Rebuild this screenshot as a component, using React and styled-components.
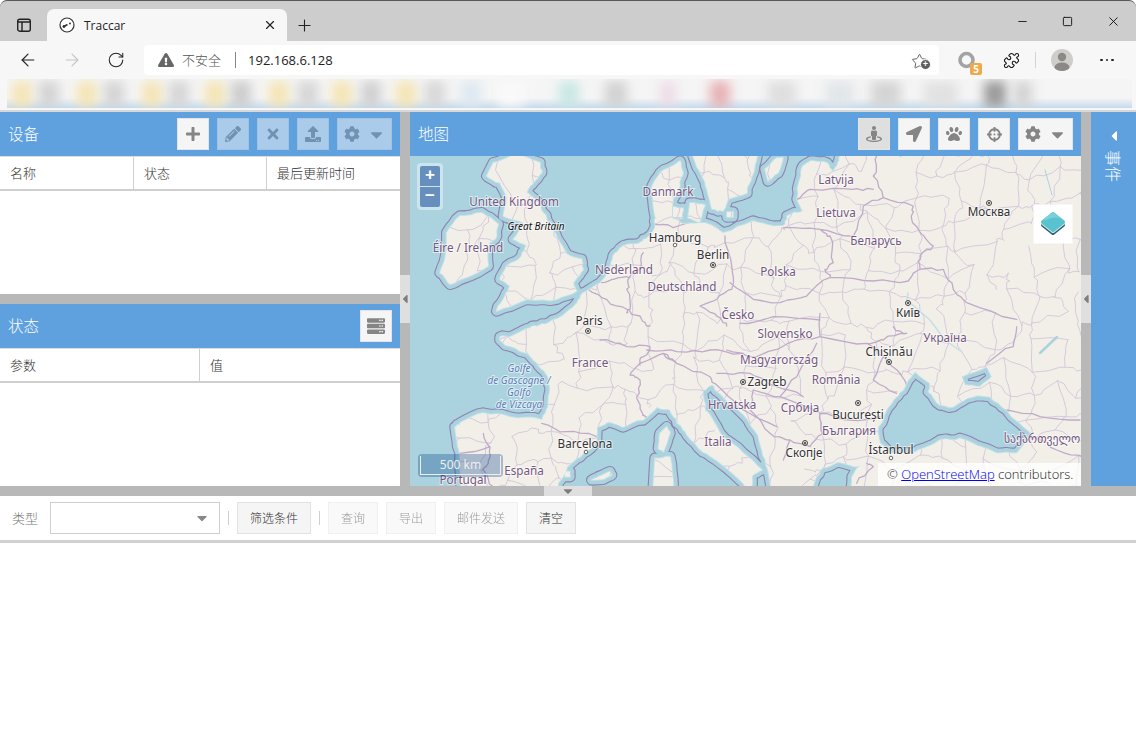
import React from 'react';
import styled, { createGlobalStyle } from 'styled-components';
import { ArrowLeft, ArrowRight, Minus, Plus, Puzzle, RotateCw, Square, Star, X } from 'lucide-react';
import {
  FaCaretDown, FaCaretLeft, FaCog, FaCrosshairs, FaExclamationTriangle, FaLocationArrow, FaPaw,
  FaPencilAlt, FaPlus, FaServer, FaStreetView, FaTimes, FaUpload,
} from 'react-icons/fa';

const CJK = `"Noto Sans CJK SC", "Noto Sans", sans-serif`;

const GlobalStyle = createGlobalStyle`
  html, body { margin: 0; height: 100%; background: #fff; overflow: hidden; }
  * { box-sizing: border-box; }
`;

const Page = styled.div`
  width: 1136px;
  height: 742px;
  display: flex;
  flex-direction: column;
  font-family: ${CJK};
`;

/* browser chrome */
const TabStrip = styled.div`
  height: 41px;
  background: #cdcdcd;
  border-top: 1px solid #55585c;
  border-radius: 7px 7px 0 0;
  display: flex;
  align-items: flex-end;
`;

const StripIcon = styled.div`
  width: 47px;
  height: 32px;
  display: flex;
  align-items: center;
  justify-content: center;
  color: #222;
`;

const Tab = styled.div`
  width: 240px;
  height: 32px;
  background: #f7f7f7;
  border-radius: 7px 7px 0 0;
  display: flex;
  align-items: center;
  padding: 0 10px 0 12px;
  font: 12px "Open Sans", sans-serif;
  color: #222;
`;

const TabTitle = styled.span`
  flex: 1;
  margin-left: 9px;
`;

const NewTab = styled.div`
  width: 34px;
  height: 32px;
  display: flex;
  align-items: center;
  justify-content: center;
`;

const WindowButtons = styled.div`
  margin-left: auto;
  height: 40px;
  display: flex;
  align-self: flex-start;
`;

const WindowButton = styled.div`
  width: 45.5px;
  display: flex;
  align-items: center;
  justify-content: center;
  color: #111;
`;

const Toolbar = styled.div`
  height: 38px;
  background: #f7f7f7;
  display: flex;
  align-items: center;
  padding-left: 6px;
`;

const NavButton = styled.div`
  width: 44px;
  height: 34px;
  display: flex;
  align-items: center;
  justify-content: center;
  color: ${(p) => (p.$off ? '#c4c4c4' : '#222')};
`;

const AddressBar = styled.div`
  width: 795px;
  height: 30px;
  margin-left: 6px;
  margin-right: 6px;
  background: #fff;
  border-radius: 4px;
  display: flex;
  align-items: center;
  padding: 0 10px 0 14px;
  color: #666;
`;

const Insecure = styled.span`
  font-size: 13px;
  font-weight: 300;
  color: #555;
  margin-left: 8px;
  position: relative;
  top: -1px;
`;

const AddressSep = styled.span`
  width: 1px;
  height: 16px;
  background: #888;
  margin: 0 12px 0 14px;
`;

const Url = styled.span`
  flex: 1;
  font: 13px "Open Sans", sans-serif;
  color: #222;
`;

const StarWrap = styled.div`
  position: relative;
  width: 18px;
  height: 18px;
  color: #555;
`;

const StarPlus = styled.span`
  position: absolute;
  right: -2px;
  bottom: -1px;
  width: 9px;
  height: 9px;
  border-radius: 50%;
  background: #5f5f5f;
  border: 1px solid #fff;
  box-sizing: content-box;
  color: #fff;
  font: bold 9px/9px "Liberation Sans", sans-serif;
  text-align: center;
`;

const ExtensionSlot = styled.div`
  position: relative;
  width: 44px;
  height: 34px;
  display: flex;
  align-items: center;
  justify-content: center;
  color: #111;
`;

const Badge = styled.span`
  position: absolute;
  left: 25px;
  top: 20px;
  width: 12px;
  height: 12px;
  background: #f0a94a;
  border-radius: 2px;
  color: #fff;
  font: bold 10px/12px "Open Sans", sans-serif;
  text-align: center;
`;

const ToolbarSep = styled.span`
  width: 1px;
  height: 16px;
  background: #d2d2d2;
  margin: 0 4px 0 2px;
`;

const Avatar = styled.div`
  width: 22px;
  height: 22px;
  margin: 0 27px 0 11px;
  border-radius: 50%;
  background: #cfcdca;
  overflow: hidden;
  display: flex;
`;

const Dots = styled.div`
  display: flex;
  gap: 3px;
`;

const Dot = styled.span`
  width: 2.5px;
  height: 2.5px;
  border-radius: 50%;
  background: #222;
`;

const BookmarksRow = styled.div`
  height: 31px;
  background: #f7f7f7;
  padding: 0 4px 2px 7px;
`;

const BookmarksBlur = styled.div`
  height: 29px;
  background: linear-gradient(#f5f5f5 65%, #c6daeb);
  display: flex;
  align-items: center;
  overflow: hidden;
`;

const Blob = styled.span`
  flex: none;
  width: ${(p) => p.$w}px;
  height: 26px;
  margin-left: ${(p) => p.$gap}px;
  background: ${(p) => p.$c};
  filter: blur(6px);
  opacity: 0.9;
`;

const ChromeEdge = styled.div`
  height: 2px;
  background: #d8d8d8;
`;

/* application */
const Workspace = styled.div`
  height: 374px;
  display: flex;
`;

const LeftColumn = styled.div`
  width: 400px;
  display: flex;
  flex-direction: column;
`;

const Panel = styled.div`
  flex: 1;
  display: flex;
  flex-direction: column;
  background: #fff;
`;

const PanelHeader = styled.div`
  height: 44px;
  flex: none;
  background: #5fa1de;
  display: flex;
  align-items: center;
  gap: 8px;
  padding: 0 8px;
`;

const PanelTitle = styled.div`
  flex: 1;
  font-size: 15.5px;
  font-weight: 300;
  color: #fff;
  padding-bottom: 2px;
`;

const ToolButton = styled.div`
  width: ${(p) => p.$w || 32}px;
  height: 32px;
  flex: none;
  background: ${(p) => (p.$pressed ? '#dfdfdf' : '#f5f5f5')};
  border: 1px solid #e4e4e4;
  opacity: ${(p) => (p.$off ? 0.5 : 1)};
  display: flex;
  align-items: center;
  justify-content: center;
  gap: 7px;
  color: #858585;
  font-size: 16px;
`;

const Caret = styled(FaCaretDown)`
  font-size: 19px;
`;

const GridHead = styled.div`
  height: 35px;
  flex: none;
  display: flex;
  border-bottom: 2px solid #cfcfcf;
  border-top: 1px solid #dcdcdc;
`;

const GridCell = styled.div`
  width: ${(p) => p.$w}px;
  display: flex;
  align-items: center;
  padding: 0 0 2px 10px;
  font-size: 13px;
  font-weight: 300;
  color: #333;
  border-right: 1px solid #d0d0d0;
  &:last-child { border-right: 0; }
`;

const VSplit = styled.div`
  width: 10px;
  flex: none;
  background: #b8b8b8;
  display: flex;
  align-items: center;
`;

const VHandle = styled.div`
  width: 10px;
  height: 48px;
  background: #dfdfdf;
  display: flex;
  align-items: center;
  justify-content: center;
  color: #7d7d7d;
  font-size: 14px;
`;

const HSplit = styled.div`
  height: 10px;
  flex: none;
  background: #b8b8b8;
  display: flex;
  justify-content: center;
`;

const HHandle = styled.div`
  width: 48px;
  height: 10px;
  background: #dfdfdf;
  display: flex;
  align-items: center;
  justify-content: center;
  color: #7d7d7d;
  font-size: 14px;
`;

const MapColumn = styled.div`
  width: 671px;
  display: flex;
  flex-direction: column;
`;

const MapArea = styled.div`
  position: relative;
  height: 330px;
  overflow: hidden;
  background: #aad3df;
`;

const MapSvg = styled.svg`
  display: block;
  width: 671px;
  height: 330px;
`;

const ZoomControl = styled.div`
  position: absolute;
  left: 7px;
  top: 7px;
  padding: 3px;
  width: 26px;
  border-radius: 4px;
  background: rgba(255, 255, 255, 0.4);
  display: flex;
  flex-direction: column;
  gap: 1px;
`;

const ZoomButton = styled.div`
  height: 20px;
  background: #668fbd;
  border-radius: ${(p) => p.$r};
  color: #fff;
  font: bold 17px/18px "Liberation Sans", sans-serif;
  text-align: center;
`;

const LayerSwitch = styled.div`
  position: absolute;
  left: 623px;
  top: 48px;
  width: 40px;
  height: 40px;
  background: #fff;
  border: 1px solid rgba(255, 255, 255, 0.5);
  background-clip: padding-box;
  display: flex;
  align-items: center;
  justify-content: center;
`;

const ScaleLine = styled.div`
  position: absolute;
  left: 8px;
  bottom: 9px;
  width: 85px;
  height: 23px;
  padding: 2px;
  border-radius: 4px;
  background: rgba(0, 60, 136, 0.3);
`;

const ScaleInner = styled.div`
  height: 19px;
  border: 1px solid #eee;
  border-top: 0;
  color: #eee;
  font: 12px/18px "Noto Sans", sans-serif;
  text-align: center;
`;

const Attribution = styled.div`
  position: absolute;
  right: 0;
  bottom: 0;
  height: 23px;
  width: 203px;
  padding: 2px 0 0 9px;
  background: rgba(255, 255, 255, 0.78);
  font: 300 13px/18px "Open Sans", sans-serif;
  color: #222;
  white-space: nowrap;
  a { color: #0000ee; text-decoration: underline; }
`;

const EventsPanel = styled.div`
  width: 45px;
  background: #5fa1de;
  display: flex;
  flex-direction: column;
  align-items: center;
  padding-top: 16px;
  color: #fff;
`;

const ChevronBox = styled.div`
  height: 16px;
  font-size: 16px;
  display: flex;
  align-items: center;
`;

const VerticalTitle = styled.div`
  margin-top: 6px;
  writing-mode: vertical-rl;
  text-orientation: sideways;
  font-size: 16px;
  font-weight: 300;
  line-height: 18px;
`;

const BottomPanel = styled.div`
  flex: 1;
  background: #fff;
`;

const ReportBar = styled.div`
  height: 47px;
  display: flex;
  align-items: flex-start;
  padding: 6px 0 0 12px;
  border-bottom: 3px solid #d0d0d0;
`;

const BarLabel = styled.div`
  width: 38px;
  height: 32px;
  font-size: 13px;
  font-weight: 300;
  line-height: 32px;
  color: #777;
`;

const Combo = styled.div`
  width: 170px;
  height: 32px;
  border: 1px solid #cfcfcf;
  display: flex;
  align-items: center;
  justify-content: flex-end;
  padding-right: 9px;
  color: #888;
  font-size: 16px;
`;

const BarSep = styled.span`
  width: 1px;
  height: 14px;
  background: #cfcfcf;
  margin: 9px 8px 0;
`;

const BarButton = styled.div`
  width: ${(p) => p.$w}px;
  height: 32px;
  margin-right: 8px;
  background: #f5f5f5;
  border: 1px solid #e2e2e2;
  font-size: 12px;
  font-weight: 300;
  line-height: 30px;
  text-align: center;
  color: #333;
  opacity: ${(p) => (p.$off ? 0.5 : 1)};
  ${(p) => p.$tight && 'margin-right: 0;'}
`;

/* map drawing, in page coordinates */
const seededRandom = (seed) => {
  let s = seed;
  return () => {
    s = (s * 16807) % 2147483647;
    return s / 2147483647;
  };
};

// crop coords (3x) to page coords
const crop = (ox, oy, flat) => {
  const out = [];
  for (let i = 0; i < flat.length; i += 2) out.push([ox + flat[i] / 3, oy + flat[i + 1] / 3]);
  return out;
};
const A = (...f) => crop(410, 156, f);
const B = (...f) => crop(740, 156, f);
const C = (...f) => crop(410, 320, f);
const D = (...f) => crop(740, 320, f);

const rough = (pts, amp, rnd, depth = 2) => {
  let cur = pts;
  for (let d = 0; d < depth; d++) {
    const next = [cur[0]];
    for (let i = 1; i < cur.length; i++) {
      const [x0, y0] = cur[i - 1];
      const [x1, y1] = cur[i];
      next.push([(x0 + x1) / 2 + (rnd() - 0.5) * amp, (y0 + y1) / 2 + (rnd() - 0.5) * amp], [x1, y1]);
    }
    cur = next;
  }
  return cur;
};

const toPath = (pts, close) =>
  'M' + pts.map((p) => `${p[0].toFixed(1)} ${p[1].toFixed(1)}`).join('L') + (close ? 'Z' : '');

const flat = (...f) => {
  const out = [];
  for (let i = 0; i < f.length; i += 2) out.push([f[i], f[i + 1]]);
  return out;
};

const coastRnd = seededRandom(4711);
const shape = (pts, amp = 2.2) => toPath(rough(pts, amp, coastRnd), true);

const continent = flat(
  840, 140, 1095, 140, 1095, 500, 850, 500, 852, 477, 860, 466, 838, 462, 822, 468, 815, 480, 810, 500,
  772, 500, 768, 470, 762, 450, 758, 435, 748, 420, 730, 403, 718, 392, 712, 385, 703, 390, 705, 410, 720, 433,
  743, 453, 762, 470, 752, 476, 750, 500,
  743, 483, 720, 463, 703, 452, 687, 435, 677, 423, 670, 410, 657, 407, 643, 420, 623, 427, 610, 422, 597, 427,
  595, 443, 580, 457, 567, 467, 558, 483, 556, 500, 460, 500,
  460, 453, 455, 427, 460, 423, 483, 413, 510, 417, 542, 420, 548, 407, 550, 387, 547, 375, 537, 363, 527, 353,
  505, 345, 500, 337, 510, 337, 530, 328, 540, 325, 550, 322, 557, 319, 577, 303, 583, 293, 600, 283, 610, 269,
  613, 256, 623, 246, 643, 241, 650, 236, 655, 228, 655, 216, 652, 186, 660, 173, 680, 161, 683, 173, 680, 186,
  673, 199, 673, 219, 683, 224, 705, 223, 723, 233, 753, 221, 773, 226, 783, 226, 787, 216, 803, 211, 797, 199,
  800, 179, 803, 166, 813, 161, 827, 163, 832, 171, 837, 166, 840, 156,
);

const landPath = [
  shape(continent),
  shape(D(525, 155, 570, 190, 565, 215, 600, 255, 640, 260, 700, 230, 750, 230, 800, 270, 875, 340, 830, 400, 770, 400, 660, 355, 600, 360, 520, 400, 450, 400, 420, 370, 415, 320, 440, 270, 460, 240, 490, 210, 510, 175)),
  shape(D(665, 170, 740, 140, 755, 170, 720, 200, 675, 195), 1),
  shape(A(250, 20, 320, -5, 390, 20, 395, 50, 370, 80, 350, 110, 385, 140, 400, 170, 425, 215, 450, 260, 470, 295, 515, 310, 520, 340, 490, 380, 500, 405, 440, 430, 350, 430, 260, 465, 285, 420, 300, 390, 270, 370, 290, 330, 335, 300, 350, 270, 310, 250, 340, 200, 280, 180, 290, 130, 270, 80, 230, 60)),
  shape(A(110, 230, 150, 180, 215, 170, 265, 205, 260, 240, 235, 270, 235, 330, 180, 360, 120, 385, 90, 350, 110, 280)),
  shape(flat(693, 140, 693, 156, 702, 176, 707, 189, 712, 209, 723, 211, 728, 199, 747, 193, 752, 176, 757, 156, 760, 140)),
  shape(flat(765, 169, 777, 158, 783, 158, 778, 173, 768, 181), 1),
  shape(flat(690, 203, 705, 205, 700, 222, 688, 218), 1.5),
  shape(flat(673, 207, 683, 208, 682, 218, 673, 217), 1),
  shape(flat(727, 212, 733, 212, 733, 217, 727, 217), 0.5),
  shape(C(770, 320, 780, 340, 760, 395, 745, 385, 750, 340), 1),
  shape(C(735, 415, 780, 410, 790, 500, 730, 500), 1),
  shape(C(545, 480, 565, 470, 600, 455, 605, 465, 580, 478), 1),
  shape(C(465, 455, 480, 455, 480, 470, 465, 470), 0.5),
].join('');

const borders = [
  // Europe west
  A(735, 205, 790, 215, 850, 195), A(700, 290, 690, 340, 660, 362, 650, 400, 660, 460, 650, 470), A(575, 380, 610, 370, 660, 365),
  A(535, 400, 590, 430, 650, 460, 690, 480, 720, 510), A(945, 240, 965, 330, 965, 400, 920, 430, 870, 450, 920, 480, 950, 510),
  C(570, 60, 650, 80, 720, 80, 700, 110, 690, 135), C(660, 165, 690, 130, 760, 100, 800, 130),
  C(660, 165, 690, 180, 680, 230, 700, 285, 710, 300), C(395, 310, 470, 335, 560, 350),
  C(150, 400, 240, 380, 235, 430, 220, 450, 250, 500), C(220, 340, 240, 380),
  C(710, 90, 800, 95, 900, 90, 1000, 100), C(760, 100, 800, 130, 900, 170, 920, 195),
  C(920, 160, 1020, 160, 1100, 200, 1180, 230), C(920, 195, 980, 260, 1100, 320),
  // central and east
  B(-30, 380, 40, 430, 120, 440, 200, 420, 270, 365), B(270, 365, 400, 375, 505, 375, 540, 340, 540, 300, 580, 270, 545, 235, 515, 190, 520, 150, 430, 125, 400, 60, 410, 0),
  B(270, 240, 280, 320, 255, 340, 270, 365), B(240, 220, 340, 240, 370, 150, 430, 125), B(130, 215, 240, 220, 270, 240),
  B(170, 130, 210, 100, 340, 100, 400, 100), B(540, 340, 610, 340, 640, 400, 680, 440, 830, 490),
  D(830, 20, 820, 80, 740, 130), D(240, -20, 240, 50, 380, 70, 430, 110, 480, 160, 500, 200),
  D(0, 10, 100, -10, 240, 0), D(-40, 90, 50, 110, 170, 60, 240, 50), D(230, 70, 170, 170, 120, 230),
  D(240, 280, 330, 300, 420, 290), D(240, 280, 250, 340, 210, 380, 150, 360), D(40, 210, 120, 230, 240, 280), D(40, 210, 30, 270, 90, 340, 150, 360, 130, 420),
  D(800, 270, 900, 290, 1020, 300), D(880, 350, 950, 390, 1030, 410), D(380, 430, 400, 440, 350, 490),
  D(380, 70, 430, 60, 500, 40, 460, 20), D(430, 110, 400, 180, 470, 220),
];

const regionRnd = seededRandom(1234);
const regionPaths = (() => {
  const step = 24;
  const cols = 28;
  const rows = 15;
  const nodes = [];
  for (let r = 0; r < rows; r++) {
    nodes.push([]);
    for (let c = 0; c < cols; c++) {
      nodes[r].push([436 + c * step + (regionRnd() - 0.5) * 20, 150 + r * step + (regionRnd() - 0.5) * 20]);
    }
  }
  const out = [];
  for (let r = 0; r < rows; r++) {
    for (let c = 0; c < cols; c++) {
      if (c + 1 < cols && regionRnd() > 0.22) out.push(toPath(rough([nodes[r][c], nodes[r][c + 1]], 6, regionRnd), false));
      if (r + 1 < rows && regionRnd() > 0.22) out.push(toPath(rough([nodes[r][c], nodes[r + 1][c]], 6, regionRnd), false));
    }
  }
  return out.join('');
})();

const countryPath = (() => {
  const rnd = seededRandom(99);
  return borders.map((b) => toPath(rough(b, 3.5, rnd), false)).join('');
})();

const LandShape = styled.path`
  fill: ${(p) => p.$fill || 'none'};
  fill-rule: evenodd;
  clip-rule: evenodd;
  stroke: ${(p) => p.$stroke || 'none'};
  stroke-width: ${(p) => p.$sw || 0}px;
  stroke-linejoin: round;
`;

const BorderLine = styled.path`
  fill: none;
  stroke: ${(p) => p.$c};
  stroke-width: ${(p) => p.$sw}px;
  stroke-linejoin: round;
  stroke-linecap: round;
`;

const MapLabel = styled.text`
  font-family: "Noto Sans", "Noto Sans CJK SC", "DejaVu Sans", sans-serif;
  font-size: ${(p) => p.$size || 11.7}px;
  font-style: ${(p) => (p.$italic ? 'italic' : 'normal')};
  fill: ${(p) => p.$c};
  stroke: rgba(255, 255, 255, 0.6);
  stroke-width: 2px;
  paint-order: stroke;
  text-anchor: middle;
`;

const COUNTRY = '#75587f';
const CITY = '#333';
const SEA = '#5d7fb5';

const labels = [
  ['Danmark', 668, 196, COUNTRY], ['United Kingdom', 514, 206, COUNTRY], ['Éire / Ireland', 468, 252, COUNTRY],
  ['Nederland', 624, 274, COUNTRY], ['Deutschland', 682, 291, COUNTRY], ['Polska', 778, 276, COUNTRY],
  ['Latvija', 836, 184, COUNTRY], ['Lietuva', 836, 217, COUNTRY], ['Беларусь', 876, 245, COUNTRY],
  ['Україна', 945, 342, COUNTRY], ['Česko', 738, 319, COUNTRY], ['France', 590, 367, COUNTRY],
  ['Slovensko', 785, 338, COUNTRY], ['Magyarország', 779, 364, COUNTRY], ['România', 836, 384, COUNTRY],
  ['Hrvatska', 732, 409, COUNTRY], ['Србија', 800, 412, COUNTRY], ['България', 849, 435, COUNTRY],
  ['Italia', 718, 446, COUNTRY], ['España', 524, 475, COUNTRY], ['Portugal', 463, 484, COUNTRY],
  ['საქართველო', 1042, 443, COUNTRY],
  ['Hamburg', 675, 242, CITY], ['Berlin', 713, 259, CITY], ['Москва', 989, 216, CITY], ['Київ', 908, 317, CITY],
  ['Paris', 589, 325, CITY], ['Chișinău', 889, 356, CITY], ['Zagreb', 767, 386, CITY], ['București', 858, 419, CITY],
  ['Barcelona', 585, 448, CITY], ['Скопје', 804, 457, CITY], ['İstanbul', 891, 454, CITY],
];

const seaLabels = [['Golfe', 519, 372], ['de Gascogne /', 519, 384], ['Golfo', 519, 396], ['de Vizcaya', 519, 408]];

const capitals = [
  [989, 203], [713, 265], [588, 331], [908, 303], [889, 362], [743, 382], [858, 403], [805, 443],
];
const towns = [[675, 245], [586, 452], [891, 458]];

const EuropeMap = () => (
  <MapSvg viewBox="410 156 671 330">
    <defs>
      <clipPath id="land-clip">
        <path d={landPath} clipRule="evenodd" />
      </clipPath>
    </defs>
    <rect x="410" y="156" width="671" height="330" fill="#aad3df" />
    <LandShape d={landPath} $stroke="#8f83ad" $sw={11.4} />
    <LandShape d={landPath} $stroke="#aad3df" $sw={9.2} />
    <LandShape d={landPath} $stroke="#c3e0e5" $sw={2} />
    <LandShape d={landPath} $fill="#f2efe9" />
    <g clipPath="url(#land-clip)">
      <BorderLine d={regionPaths} $c="#d5cadb" $sw={1} />
      <BorderLine d={countryPath} $c="#bfabc8" $sw={1.3} />
      <BorderLine d="M908 293L907 300L930 320L945 340L962 352" $c="#c3e0e5" $sw={1.5} />
      <BorderLine d="M1040 353L1057 337" $c="#aad3df" $sw={2.5} />
      <BorderLine d="M1045 170L1052 195" $c="#aad3df" $sw={1} />
    </g>
    {labels.map(([t, x, y, c]) => (
      <MapLabel key={t} x={x} y={y} $c={c}>{t}</MapLabel>
    ))}
    <MapLabel x={536} y={230} $c="#111" $size={10} $italic>Great Britain</MapLabel>
    {seaLabels.map(([t, x, y]) => (
      <MapLabel key={t} x={x} y={y} $c={SEA} $size={10} $italic>{t}</MapLabel>
    ))}
    {capitals.map(([x, y]) => (
      <g key={`${x}-${y}`} fill="none" stroke="#444">
        <circle cx={x} cy={y} r="2.5" />
        <circle cx={x} cy={y} r="0.7" fill="#444" />
      </g>
    ))}
    {towns.map(([x, y]) => (
      <circle key={`${x}-${y}`} cx={x} cy={y} r="1.8" fill="#fff" stroke="#666" />
    ))}
  </MapSvg>
);

const LayersIcon = () => (
  <svg width="28" height="30" viewBox="0 0 28 30" strokeWidth="4" strokeLinejoin="round">
    <path d="M14 8L24 16L14 24L4 16Z" fill="#2c5a6e" stroke="#2c5a6e" />
    <path d="M14 6.2L24 14.2L14 22.2L4 14.2Z" fill="#cfe6ea" stroke="#cfe6ea" />
    <path d="M14 5L24 13L14 21L4 13Z" fill="#58c3d0" stroke="#58c3d0" />
    <path d="M14 3.5L22 9.5Q14 7 6 11.5L4.5 10Z" fill="#7dd0da" stroke="none" />
  </svg>
);

const Favicon = () => (
  <svg width="16" height="16" viewBox="0 0 16 16">
    <circle cx="8" cy="8" r="7" fill="#fff" stroke="#333" strokeWidth="1.2" />
    <path d="M4 10L8.5 7.5" stroke="#333" strokeWidth="1.5" />
    <circle cx="5" cy="9.5" r="1.4" fill="#333" />
    <circle cx="11" cy="6.5" r="1" fill="#333" />
  </svg>
);

const SidebarGlyph = () => (
  <svg width="16" height="16" viewBox="0 0 16 16" fill="none" stroke="#222" strokeWidth="1.4">
    <rect x="1.7" y="2.2" width="12.6" height="12" rx="2" />
    <path d="M1.7 5H14.3M6 5V14" />
  </svg>
);

const CoinRing = () => (
  <svg width="20" height="20" viewBox="0 0 20 20" fill="none">
    <circle cx="9.5" cy="10" r="6.5" stroke="#a3a3a3" strokeWidth="3.6" />
  </svg>
);

const AvatarFace = () => (
  <svg width="22" height="22" viewBox="0 0 22 22" fill="#8b8986">
    <circle cx="11" cy="8" r="4.2" />
    <ellipse cx="11" cy="18.5" rx="7.5" ry="5" />
  </svg>
);

const blobs = [
  ['#f5e3ae', 20, 5], ['#cfcfcf', 20, 7], ['#f5e3ae', 20, 18], ['#d0d0d0', 20, 7], ['#f5e3ae', 20, 18],
  ['#d2d2d2', 20, 7], ['#f5e3ae', 20, 16], ['#c8c8c8', 20, 6], ['#f5e3ae', 20, 18], ['#d2d2d2', 20, 9],
  ['#f5e3ae', 20, 14], ['#cccccc', 20, 9], ['#f5e3ae', 20, 15], ['#d4d4d4', 20, 9], ['#dbe7f2', 20, 16],
  ['#fafafa', 26, 17], ['#c3e6e2', 20, 35], ['#cdcdcd', 22, 26], ['#ecd9e6', 16, 33], ['#e6a9ae', 20, 34],
  ['#dcdcdc', 28, 38], ['#dfe4e8', 28, 30], ['#d0d0d0', 30, 17], ['#dfdfdf', 34, 23], ['#8f8f8f', 22, 26],
  ['#cfcfcf', 18, 8],
];

const App = () => (
  <Page>
    <GlobalStyle />
    <TabStrip>
      <StripIcon><SidebarGlyph /></StripIcon>
      <Tab>
        <Favicon />
        <TabTitle>Traccar</TabTitle>
        <X size={14} color="#222" />
      </Tab>
      <NewTab><Plus size={19} strokeWidth={1.4} color="#222" /></NewTab>
      <WindowButtons>
        <WindowButton><Minus size={13} strokeWidth={1.6} /></WindowButton>
        <WindowButton><Square size={11} strokeWidth={2} /></WindowButton>
        <WindowButton><X size={15} strokeWidth={1.5} /></WindowButton>
      </WindowButtons>
    </TabStrip>
    <Toolbar>
      <NavButton><ArrowLeft size={20} strokeWidth={1.4} /></NavButton>
      <NavButton $off><ArrowRight size={20} strokeWidth={1.4} /></NavButton>
      <NavButton><RotateCw size={18} strokeWidth={1.4} /></NavButton>
      <AddressBar>
        <FaExclamationTriangle size={16} />
        <Insecure>不安全</Insecure>
        <AddressSep />
        <Url>192.168.6.128</Url>
        <StarWrap>
          <Star size={17} strokeWidth={1.3} />
          <StarPlus>+</StarPlus>
        </StarWrap>
      </AddressBar>
      <ExtensionSlot>
        <CoinRing />
        <Badge>5</Badge>
      </ExtensionSlot>
      <ExtensionSlot><Puzzle size={17} strokeWidth={1.5} /></ExtensionSlot>
      <ToolbarSep />
      <Avatar><AvatarFace /></Avatar>
      <Dots><Dot /><Dot /><Dot /></Dots>
    </Toolbar>
    <BookmarksRow>
      <BookmarksBlur>
        {blobs.map(([c, w, gap], i) => (
          <Blob key={i} $c={c} $w={w} $gap={gap} />
        ))}
      </BookmarksBlur>
    </BookmarksRow>
    <ChromeEdge />
    <Workspace>
      <LeftColumn>
        <Panel>
          <PanelHeader>
            <PanelTitle>设备</PanelTitle>
            <ToolButton><FaPlus /></ToolButton>
            <ToolButton $off><FaPencilAlt /></ToolButton>
            <ToolButton $off><FaTimes /></ToolButton>
            <ToolButton $off><FaUpload /></ToolButton>
            <ToolButton $off $w={55}><FaCog /><Caret /></ToolButton>
          </PanelHeader>
          <GridHead>
            <GridCell $w={134}>名称</GridCell>
            <GridCell $w={133}>状态</GridCell>
            <GridCell $w={133}>最后更新时间</GridCell>
          </GridHead>
        </Panel>
        <HSplit />
        <Panel>
          <PanelHeader>
            <PanelTitle>状态</PanelTitle>
            <ToolButton><FaServer size={18} /></ToolButton>
          </PanelHeader>
          <GridHead>
            <GridCell $w={200}>参数</GridCell>
            <GridCell $w={200}>值</GridCell>
          </GridHead>
        </Panel>
      </LeftColumn>
      <VSplit>
        <VHandle><FaCaretLeft /></VHandle>
      </VSplit>
      <MapColumn>
        <PanelHeader>
          <PanelTitle>地图</PanelTitle>
          <ToolButton $pressed><FaStreetView /></ToolButton>
          <ToolButton><FaLocationArrow /></ToolButton>
          <ToolButton><FaPaw /></ToolButton>
          <ToolButton><FaCrosshairs size={15} /></ToolButton>
          <ToolButton $w={55}><FaCog /><Caret /></ToolButton>
        </PanelHeader>
        <MapArea>
          <EuropeMap />
          <ZoomControl>
            <ZoomButton $r="2px 2px 0 0">+</ZoomButton>
            <ZoomButton $r="0 0 2px 2px">−</ZoomButton>
          </ZoomControl>
          <LayerSwitch><LayersIcon /></LayerSwitch>
          <ScaleLine><ScaleInner>500 km</ScaleInner></ScaleLine>
          <Attribution>© <a href="#osm">OpenStreetMap</a> contributors.</Attribution>
        </MapArea>
      </MapColumn>
      <VSplit>
        <VHandle><FaCaretLeft /></VHandle>
      </VSplit>
      <EventsPanel>
        <ChevronBox><FaCaretLeft /></ChevronBox>
        <VerticalTitle>事件</VerticalTitle>
      </EventsPanel>
    </Workspace>
    <HSplit>
      <HHandle><FaCaretDown /></HHandle>
    </HSplit>
    <BottomPanel>
      <ReportBar>
        <BarLabel>类型</BarLabel>
        <Combo><FaCaretDown /></Combo>
        <BarSep />
        <BarButton $w={74} $tight>筛选条件</BarButton>
        <BarSep />
        <BarButton $w={50} $off>查询</BarButton>
        <BarButton $w={50} $off>导出</BarButton>
        <BarButton $w={74} $off>邮件发送</BarButton>
        <BarButton $w={50}>清空</BarButton>
      </ReportBar>
    </BottomPanel>
  </Page>
);

export default App;
